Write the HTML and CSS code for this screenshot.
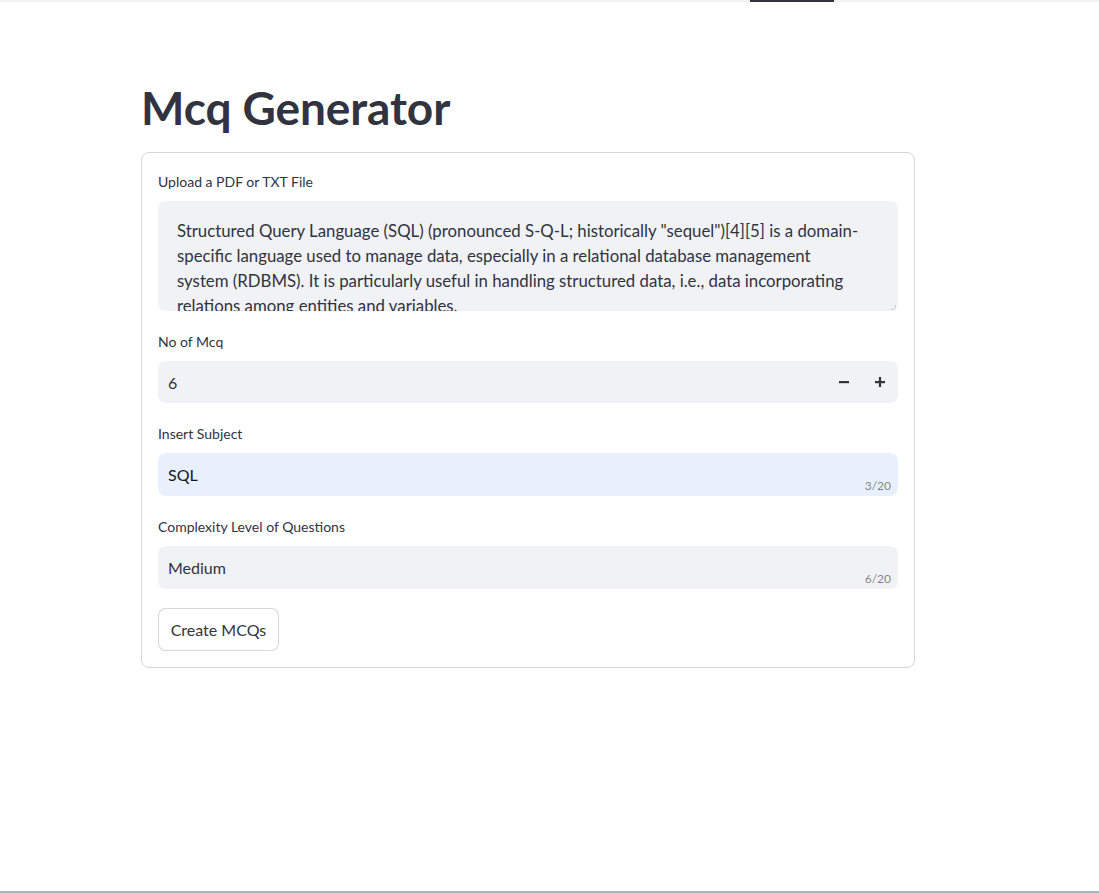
FILE: index.html
```html
<!DOCTYPE html>
<html lang="en">
<head>
<meta charset="utf-8">
<title>Mcq Generator</title>
<link rel="stylesheet" href="styles.css">
</head>
<body>
<div class="page">
  <div class="topbar"><div class="topbar-mark"></div></div>
  <main class="main">
    <h1 class="title">Mcq Generator</h1>
    <form class="form">
      <div class="field">
        <label class="label">Upload a PDF or TXT File</label>
        <div class="textarea">
          <div class="textarea-text">Structured Query Language (SQL) (pronounced S-Q-L; historically "sequel")[4][5] is a domain-<br>specific language used to manage data, especially in a relational database management<br>system (RDBMS). It is particularly useful in handling structured data, i.e., data incorporating<br>relations among entities and variables.</div>
          <span class="resize"></span>
        </div>
      </div>
      <div class="field">
        <label class="label">No of Mcq</label>
        <div class="input number">
          <span class="value">6</span>
          <span class="steppers">
            <svg class="step" width="12" height="12" viewBox="0 0 12 12"><rect x="1" y="5" width="10" height="2.2" fill="#31333f"/></svg>
            <svg class="step" width="12" height="12" viewBox="0 0 12 12"><rect x="1" y="5" width="10" height="2.2" fill="#31333f"/><rect x="4.9" y="1" width="2.2" height="10" fill="#31333f"/></svg>
          </span>
        </div>
      </div>
      <div class="field">
        <label class="label">Insert Subject</label>
        <div class="input text autofill">
          <span class="value">SQL</span>
          <span class="counter">3/20</span>
        </div>
      </div>
      <div class="field">
        <label class="label">Complexity Level of Questions</label>
        <div class="input text">
          <span class="value">Medium</span>
          <span class="counter">6/20</span>
        </div>
      </div>
      <div class="actions">
        <button type="button" class="button">Create MCQs</button>
      </div>
    </form>
  </main>
  <div class="bottomline"></div>
</div>
</body>
</html>
```

FILE: styles.css
```css
* { box-sizing: border-box; }
html, body { margin: 0; padding: 0; background: #ffffff; }
body {
  font-family: "Lato", "Source Sans Pro", "Noto Sans", sans-serif;
  color: #31333f;
}
.page {
  width: 1099px;
  height: 893px;
  display: flex;
  flex-direction: column;
  overflow: hidden;
}
.topbar {
  height: 2px;
  background: #f0f1f3;
  display: flex;
}
.topbar-mark {
  margin-left: 750px;
  width: 84px;
  height: 2px;
  background: #31333f;
}
.main {
  flex: 1;
  padding-left: 141px;
}
.title {
  margin: 0;
  padding-top: 78px;
  font-size: 46px;
  line-height: 56px;
  font-weight: 700;
  letter-spacing: -0.1px;
  color: #31333f;
  height: 150px;
}
.form {
  width: 774px;
  border: 1px solid rgba(49, 51, 63, 0.2);
  border-radius: 8px;
  padding: 14px 16px 16px 16px;
  display: flex;
  flex-direction: column;
  gap: 16px;
}
.field {
  display: flex;
  flex-direction: column;
}
.label {
  font-size: 14px;
  line-height: 20px;
  padding-top: 5px;
  margin-bottom: 9px;
  color: #31333f;
}
.textarea {
  position: relative;
  height: 110px;
  background: #f0f2f6;
  border-radius: 8px;
  overflow: hidden;
  padding: 17px 16px 0 19px;
}
.textarea-text {
  font-size: 16.8px;
  line-height: 25px;
  color: #31333f;
  white-space: nowrap;
}
.resize {
  position: absolute;
  right: 2px;
  bottom: 1px;
  width: 5px;
  height: 5px;
  border-right: 1px solid #c9ccd3;
  border-bottom: 1px solid #c9ccd3;
}
.input {
  height: 43px;
  background: #f0f2f6;
  border-radius: 8px;
  display: flex;
  align-items: center;
  padding-left: 10px;
  position: relative;
  font-size: 16px;
}
.input.number { height: 42px; }
.input.autofill { background: #e8f0fe; }
.input.autofill .value { color: #16171c; }
.value { flex: 1; }
.steppers {
  display: flex;
  align-items: center;
  gap: 24px;
  padding-right: 12px;
}
.step { display: block; }
.counter {
  position: absolute;
  right: 7px;
  bottom: 2px;
  font-size: 12px;
  line-height: 16px;
  color: rgba(49, 51, 63, 0.6);
}
.actions {
  padding-top: 3px;
  display: flex;
}
.button {
  font-family: inherit;
  font-size: 16px;
  color: #31333f;
  background: #ffffff;
  border: 1px solid rgba(49, 51, 63, 0.2);
  border-radius: 8px;
  height: 43px;
  width: 121px;
  padding: 0;
}
.bottomline {
  height: 2px;
  background: #a9b3bf;
}
```
